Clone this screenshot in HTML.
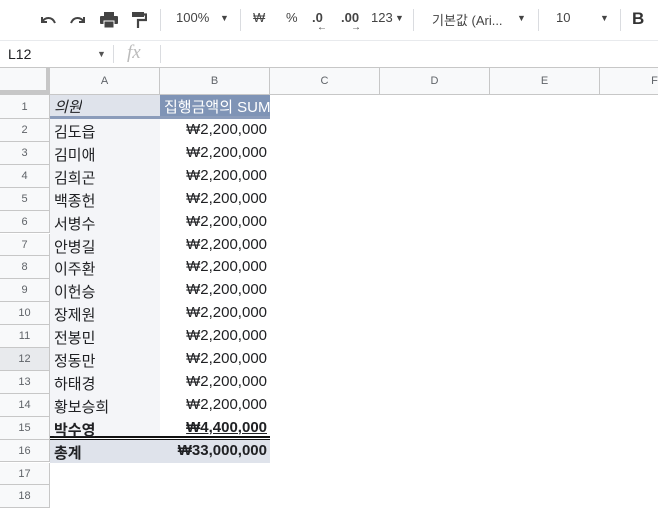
<!DOCTYPE html>
<html><head><meta charset="utf-8"><style>
*{margin:0;padding:0;box-sizing:border-box}
body{width:658px;height:508px;overflow:hidden;background:#fff;font-family:"Liberation Sans","Noto Sans CJK KR",sans-serif;position:relative;color:#202124}
.a{position:absolute}
.tb{top:0;left:0;width:658px;height:41px;border-bottom:1px solid #e8eaed}
.t{position:absolute;top:10px;font-size:13px;color:#444}
.sep{position:absolute;top:9px;width:1px;height:22px;background:#dadce0}
.fb{top:41px;left:0;width:658px;height:27px;border-bottom:1px solid #c7c7c7}
.ch{top:68px;left:0;width:658px;height:27px;background:#f8f9fa;border-bottom:1px solid #c7c7c7}
.col{position:absolute;top:0;height:26px;border-right:1px solid #c7c7c7;text-align:center;font-size:11px;color:#5f6368;line-height:26px}
.rh{position:absolute;left:0;width:50px;background:#f8f9fa;border-right:1px solid #c7c7c7;border-bottom:1px solid #c7c7c7;text-align:center;font-size:11px;color:#5f6368}
.cell{position:absolute;font-size:15px;white-space:nowrap;overflow:hidden}
</style></head><body>
<div class="a tb">
<svg class="a" style="left:38px;top:12px" width="20" height="16" viewBox="0 0 20 16"><path d="M4 5 L4 10 L9 10" fill="none" stroke="#444" stroke-width="2"/><path d="M4 10 C7 5 14 4 17 11" fill="none" stroke="#444" stroke-width="2"/></svg>
<svg class="a" style="left:68px;top:12px" width="20" height="16" viewBox="0 0 20 16"><path d="M16 5 L16 10 L11 10" fill="none" stroke="#444" stroke-width="2"/><path d="M16 10 C13 5 6 4 3 11" fill="none" stroke="#444" stroke-width="2"/></svg>
<svg class="a" style="left:99px;top:11px" width="20" height="18" viewBox="0 0 20 18"><rect x="5" y="1" width="10" height="4" fill="#444"/><rect x="1" y="5" width="18" height="8" rx="1" fill="#444"/><rect x="5" y="10" width="10" height="7" fill="#444" stroke="#fff" stroke-width="1"/></svg>
<svg class="a" style="left:131px;top:11px" width="16" height="18" viewBox="0 0 16 18"><rect x="1" y="1" width="12" height="5" fill="#444"/><path d="M13 3.5 H15 V9 H7 V17" fill="none" stroke="#444" stroke-width="2.2"/></svg>
<div class="sep" style="left:160px"></div>
<div class="t" style="left:176px">100%</div>
<div class="t" style="left:220px;font-size:9px;top:13px">▼</div>
<div class="sep" style="left:240px"></div>
<div class="t" style="left:253px">₩</div>
<div class="t" style="left:286px">%</div>
<div class="t" style="left:312px;font-weight:bold">.0</div>
<div class="t" style="left:317px;top:22px;font-size:10px">←</div>
<div class="t" style="left:341px;font-weight:bold">.00</div>
<div class="t" style="left:351px;top:22px;font-size:10px">→</div>
<div class="t" style="left:371px">123</div>
<div class="t" style="left:395px;font-size:9px;top:13px">▼</div>
<div class="sep" style="left:413px"></div>
<div class="t" style="left:432px">기본값 (Ari...</div>
<div class="t" style="left:517px;font-size:9px;top:13px">▼</div>
<div class="sep" style="left:538px"></div>
<div class="t" style="left:556px">10</div>
<div class="t" style="left:600px;font-size:9px;top:13px">▼</div>
<div class="sep" style="left:620px"></div>
<div class="t" style="left:632px;font-weight:bold;font-size:17px;top:9px;color:#333">B</div>
</div>
<div class="a fb">
<div class="a" style="left:8px;top:5px;font-size:14px">L12</div>
<div class="a" style="left:97px;top:8px;font-size:9px;color:#555">▼</div>
<div class="a" style="left:113px;top:4px;width:1px;height:18px;background:#dadce0"></div>
<div class="a" style="left:127px;top:1px;font-size:19px;color:#bbb;font-style:italic;font-family:'Liberation Serif',serif">fx</div>
<div class="a" style="left:160px;top:4px;width:1px;height:18px;background:#dadce0"></div>
</div>
<div class="a ch">
<div class="col" style="left:0;width:50px;border-right:4px solid #c7c7c7;border-bottom:4px solid #c7c7c7;height:26px"></div>
<div class="col" style="left:50px;width:110px">A</div>
<div class="col" style="left:160px;width:110px">B</div>
<div class="col" style="left:270px;width:110px">C</div>
<div class="col" style="left:380px;width:110px">D</div>
<div class="col" style="left:490px;width:110px">E</div>
<div class="col" style="left:600px;width:110px">F</div>
</div>
<div class="a" style="left:50px;top:95px;width:110px;height:24px;background:#dfe3eb;border-bottom:3px solid #8b9cba"></div>
<div class="a" style="left:160px;top:95px;width:110px;height:24px;background:#7f94b6;border-bottom:3px solid #8b9cba"></div>
<div class="a" style="left:50px;top:119px;width:110px;height:318px;background:#f4f5f8"></div>
<div class="a" style="left:50px;top:436px;width:220px;height:4px;border-top:2px solid #111;border-bottom:1px solid #111"></div>
<div class="a" style="left:50px;top:440px;width:220px;height:23px;background:#dfe3eb"></div>
<div class="cell" style="left:54px;top:96px;font-style:italic">의원</div>
<div class="cell" style="left:164px;top:96px;width:106px;color:#fff">집행금액의 SUM</div>
<div id="rows"></div>
<script>
var names=["김도읍","김미애","김희곤","백종헌","서병수","안병길","이주환","이헌승","장제원","전봉민","정동만","하태경","황보승희","박수영"];
var h='';
function rt(n){return n==1?95:119+(n-2)*22.9;}
for(var n=1;n<=18;n++){var t=rt(n),hh=n==1?24:22.9;
h+='<div class="rh" style="top:'+t+'px;height:'+hh+'px;line-height:'+hh+'px;'+(n==12?'background:#e8eaed;':'')+'">'+n+'</div>';}
for(var i=0;i<14;i++){var n=i+2,t=rt(n)+2,b=(n==15);
h+='<div class="cell" style="left:54px;top:'+t+'px;'+(b?'font-weight:bold;text-decoration:underline;':'')+'">'+names[i]+'</div>';
h+='<div class="cell" style="left:160px;width:107px;text-align:right;top:'+t+'px;'+(b?'font-weight:bold;text-decoration:underline;':'')+'">'+(b?'₩4,400,000':'₩2,200,000')+'</div>';}
var t=rt(16)+2;
h+='<div class="cell" style="left:54px;top:'+t+'px;font-weight:bold">총계</div>';
h+='<div class="cell" style="left:160px;width:107px;text-align:right;top:'+t+'px;font-weight:bold">₩33,000,000</div>';
document.getElementById('rows').innerHTML=h;
</script>
</body></html>
